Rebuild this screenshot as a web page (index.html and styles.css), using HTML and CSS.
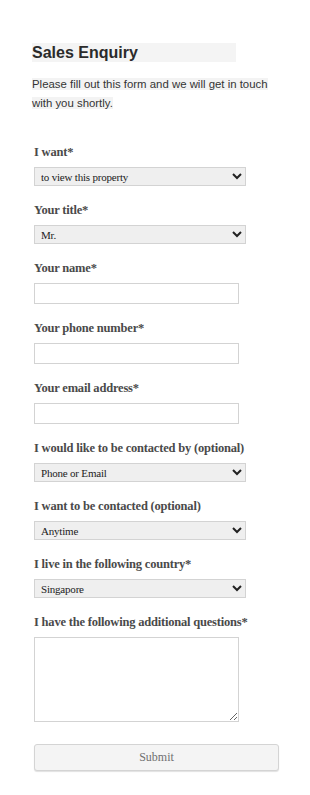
FILE: index.html
```html
<!DOCTYPE html>
<html lang="en">
<head>
  <meta charset="UTF-8">
  <meta name="viewport" content="width=device-width, initial-scale=1.0">
  <title>Sales Enquiry</title>
  <link rel="stylesheet" href="styles.css">
</head>
<body>
  <div class="enquiry">
    <h2 class="enquiry-title">Sales Enquiry</h2>
    <p class="enquiry-intro"><span>Please fill out this form and we will get in touch with you shortly.</span></p>

    <form class="enquiry-form">
      <div class="form-group">
        <label for="want">I want*</label>
        <select id="want">
          <option>to view this property</option>
        </select>
      </div>

      <div class="form-group">
        <label for="title">Your title*</label>
        <select id="title">
          <option>Mr.</option>
        </select>
      </div>

      <div class="form-group">
        <label for="name">Your name*</label>
        <input type="text" id="name">
      </div>

      <div class="form-group">
        <label for="phone">Your phone number*</label>
        <input type="text" id="phone">
      </div>

      <div class="form-group">
        <label for="email">Your email address*</label>
        <input type="text" id="email">
      </div>

      <div class="form-group">
        <label for="contact-by">I would like to be contacted by (optional)</label>
        <select id="contact-by">
          <option>Phone or Email</option>
        </select>
      </div>

      <div class="form-group">
        <label for="contact-when">I want to be contacted (optional)</label>
        <select id="contact-when">
          <option>Anytime</option>
        </select>
      </div>

      <div class="form-group">
        <label for="country">I live in the following country*</label>
        <select id="country">
          <option>Singapore</option>
        </select>
      </div>

      <div class="form-group">
        <label for="questions">I have the following additional questions*</label>
        <textarea id="questions"></textarea>
      </div>

      <button type="submit" class="submit-button">Submit</button>
    </form>
  </div>
</body>
</html>
```

FILE: styles.css
```css
body {
  margin: 0;
  background: #fff;
  color: #333;
}
.enquiry {
  padding: 43px 0 40px 32px;
}
.enquiry-title {
  font-family: 'Liberation Sans', Arial, sans-serif;
  font-size: 16px;
  font-weight: bold;
  color: #2b2b2b;
  background-color: #f4f4f4;
  width: 204px;
  height: 19px;
  line-height: 19px;
  margin: 0;
}
.enquiry-intro {
  font-family: 'Liberation Sans', Arial, sans-serif;
  font-size: 11.4px;
  line-height: 19px;
  color: #333;
  width: 240px;
  margin: 13px 0 0 0;
}
.enquiry-intro span {
  background-color: #f3f3f3;
}
.enquiry-form {
  padding-left: 2px;
  margin-top: 31px;
}
.form-group {
  margin-bottom: 16px;
}
label {
  display: block;
  font-family: 'Liberation Serif', 'Times New Roman', serif;
  font-size: 12.5px;
  letter-spacing: -0.2px;
  font-weight: bold;
  line-height: 16px;
  color: #4a4a4a;
  margin-bottom: 7px;
}
select {
  display: block;
  width: 212px;
  height: 19px;
  font-family: 'Liberation Serif', 'Times New Roman', serif;
  font-size: 11px;
  letter-spacing: -0.2px;
  color: #222;
  background-color: #efefef;
  border: 1px solid #d3d3d3;
  border-radius: 0;
  padding: 0 2px;
}
input[type="text"] {
  display: block;
  box-sizing: border-box;
  width: 205px;
  height: 21px;
  border: 1px solid #d3d3d3;
  padding: 2px 4px;
  margin: 0;
}
textarea {
  display: block;
  box-sizing: border-box;
  width: 205px;
  height: 85px;
  border: 1px solid #d3d3d3;
  margin: 0;
}
.submit-button {
  display: block;
  box-sizing: border-box;
  width: 245px;
  height: 27px;
  margin-top: 22px;
  font-family: 'Liberation Serif', 'Times New Roman', serif;
  font-size: 12px;
  color: #707070;
  background-color: #f4f4f4;
  border: 1px solid #d4d4d4;
  border-radius: 3px;
  box-shadow: 0 1px 1px rgba(0, 0, 0, 0.12);
}
```
